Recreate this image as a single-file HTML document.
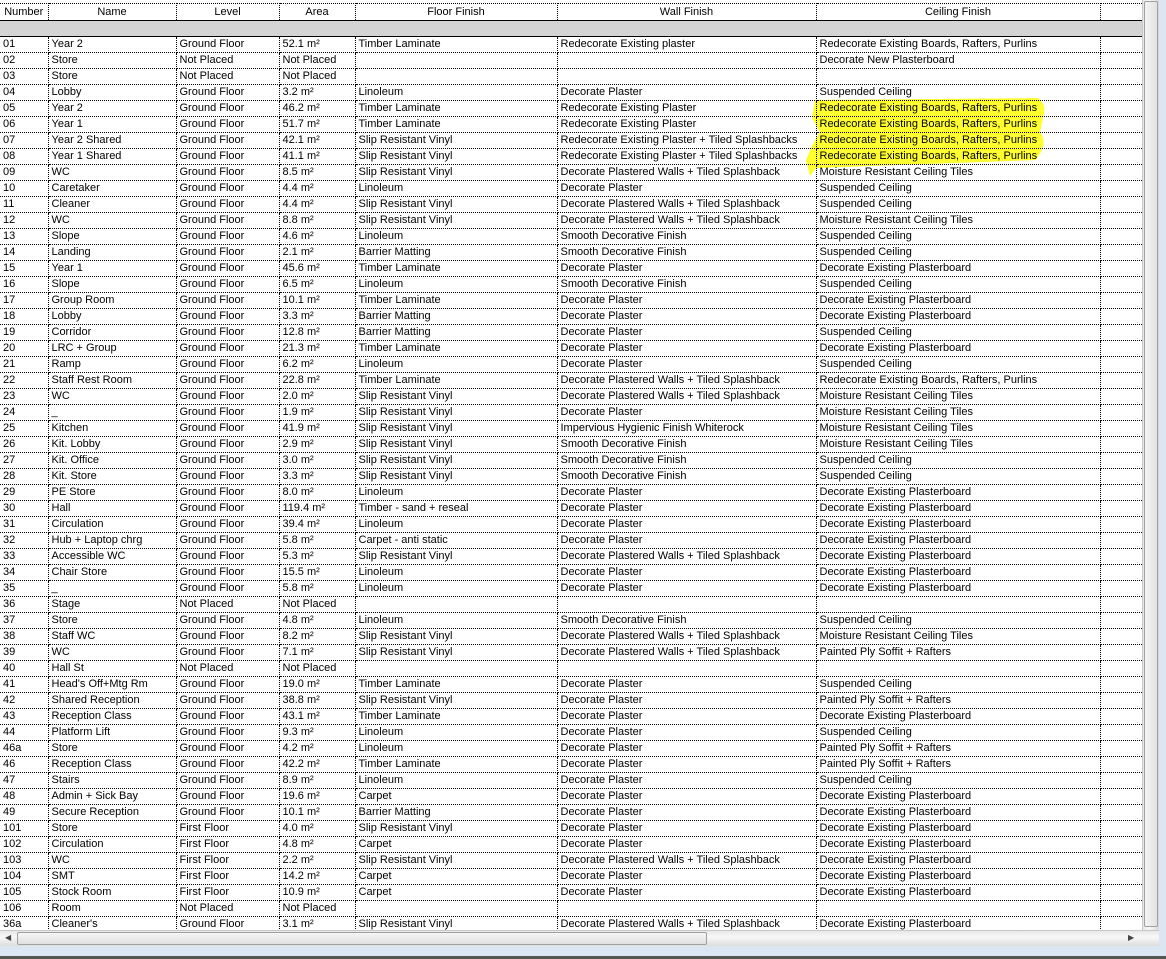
<!DOCTYPE html>
<html><head><meta charset="utf-8"><style>
body{margin:0;width:1166px;height:959px;overflow:hidden;background:#fff;font-family:"Liberation Sans",Arial,sans-serif;font-size:11px;color:#000;position:relative}
#wrap{position:absolute;left:0;top:0;width:1142px;height:930px;overflow:hidden}
table{border-collapse:collapse;table-layout:fixed;width:1142px;margin-top:3px}
td{height:15px;line-height:15px;padding:0 0 0 3px;border-bottom:1px dotted #000;border-right:1px dotted #000;white-space:nowrap;overflow:hidden}
tr.h td{height:15px;text-align:center;padding:0;border-top:1px dotted #000;border-bottom:1px solid #000;line-height:16px}
tr.g td{height:15px;background:#d4d4d4;border-right:none;border-bottom:1px solid #000}
td:last-child{border-right:none}
#hl{position:absolute;left:0;top:0}
#vs{position:absolute;left:1142px;top:0;width:17px;height:930px;background:linear-gradient(90deg,#e8e8e8,#f8f8f8 40%,#d8d8d8);border-left:1px solid #c8c8c8;box-sizing:border-box}
#vs .t{position:absolute;left:1px;top:1px;width:14px;height:926px;border:1px solid #a0a0a0;border-radius:2px;background:linear-gradient(90deg,#f4f4f4,#e2e2e2);box-sizing:border-box}
#rb{position:absolute;left:1159px;top:0;width:7px;height:959px;background:#dbe6f3}
#hs{position:absolute;left:0;top:930px;width:1159px;height:16px;background:linear-gradient(#e8e8e8,#f8f8f8 40%,#dcdcdc);border-top:1px solid #c8c8c8;box-sizing:border-box}
#hs .t{position:absolute;left:17px;top:1px;width:690px;height:13px;border:1px solid #a0a0a0;border-radius:2px;background:linear-gradient(#f6f6f6,#e0e0e0);box-sizing:border-box}
#bb{position:absolute;left:0;top:946px;width:1166px;height:10px;background:#dbe6f3}
#bl{position:absolute;left:0;top:956px;width:1166px;height:3px;background:#555}
</style></head><body>
<div id="wrap">
<table>
<colgroup><col style="width:48px"><col style="width:128px"><col style="width:103px"><col style="width:76px"><col style="width:202px"><col style="width:259px"><col style="width:284px"><col style="width:42px"></colgroup>
<tr class="h"><td>Number</td><td>Name</td><td>Level</td><td>Area</td><td>Floor Finish</td><td>Wall Finish</td><td>Ceiling Finish</td><td></td></tr>
<tr class="g"><td></td><td></td><td></td><td></td><td></td><td></td><td></td><td></td></tr>
<tr><td>01</td><td>Year 2</td><td>Ground Floor</td><td>52.1 m²</td><td>Timber Laminate</td><td>Redecorate Existing plaster</td><td>Redecorate Existing Boards, Rafters, Purlins</td><td></td></tr>
<tr><td>02</td><td>Store</td><td>Not Placed</td><td>Not Placed</td><td></td><td></td><td>Decorate New Plasterboard</td><td></td></tr>
<tr><td>03</td><td>Store</td><td>Not Placed</td><td>Not Placed</td><td></td><td></td><td></td><td></td></tr>
<tr><td>04</td><td>Lobby</td><td>Ground Floor</td><td>3.2 m²</td><td>Linoleum</td><td>Decorate Plaster</td><td>Suspended Ceiling</td><td></td></tr>
<tr><td>05</td><td>Year 2</td><td>Ground Floor</td><td>46.2 m²</td><td>Timber Laminate</td><td>Redecorate Existing Plaster</td><td>Redecorate Existing Boards, Rafters, Purlins</td><td></td></tr>
<tr><td>06</td><td>Year 1</td><td>Ground Floor</td><td>51.7 m²</td><td>Timber Laminate</td><td>Redecorate Existing Plaster</td><td>Redecorate Existing Boards, Rafters, Purlins</td><td></td></tr>
<tr><td>07</td><td>Year 2 Shared</td><td>Ground Floor</td><td>42.1 m²</td><td>Slip Resistant Vinyl</td><td>Redecorate Existing Plaster + Tiled Splashbacks</td><td>Redecorate Existing Boards, Rafters, Purlins</td><td></td></tr>
<tr><td>08</td><td>Year 1 Shared</td><td>Ground Floor</td><td>41.1 m²</td><td>Slip Resistant Vinyl</td><td>Redecorate Existing Plaster + Tiled Splashbacks</td><td>Redecorate Existing Boards, Rafters, Purlins</td><td></td></tr>
<tr><td>09</td><td>WC</td><td>Ground Floor</td><td>8.5 m²</td><td>Slip Resistant Vinyl</td><td>Decorate Plastered Walls + Tiled Splashback</td><td>Moisture Resistant Ceiling Tiles</td><td></td></tr>
<tr><td>10</td><td>Caretaker</td><td>Ground Floor</td><td>4.4 m²</td><td>Linoleum</td><td>Decorate Plaster</td><td>Suspended Ceiling</td><td></td></tr>
<tr><td>11</td><td>Cleaner</td><td>Ground Floor</td><td>4.4 m²</td><td>Slip Resistant Vinyl</td><td>Decorate Plastered Walls + Tiled Splashback</td><td>Suspended Ceiling</td><td></td></tr>
<tr><td>12</td><td>WC</td><td>Ground Floor</td><td>8.8 m²</td><td>Slip Resistant Vinyl</td><td>Decorate Plastered Walls + Tiled Splashback</td><td>Moisture Resistant Ceiling Tiles</td><td></td></tr>
<tr><td>13</td><td>Slope</td><td>Ground Floor</td><td>4.6 m²</td><td>Linoleum</td><td>Smooth Decorative Finish</td><td>Suspended Ceiling</td><td></td></tr>
<tr><td>14</td><td>Landing</td><td>Ground Floor</td><td>2.1 m²</td><td>Barrier Matting</td><td>Smooth Decorative Finish</td><td>Suspended Ceiling</td><td></td></tr>
<tr><td>15</td><td>Year 1</td><td>Ground Floor</td><td>45.6 m²</td><td>Timber Laminate</td><td>Decorate Plaster</td><td>Decorate Existing Plasterboard</td><td></td></tr>
<tr><td>16</td><td>Slope</td><td>Ground Floor</td><td>6.5 m²</td><td>Linoleum</td><td>Smooth Decorative Finish</td><td>Suspended Ceiling</td><td></td></tr>
<tr><td>17</td><td>Group Room</td><td>Ground Floor</td><td>10.1 m²</td><td>Timber Laminate</td><td>Decorate Plaster</td><td>Decorate Existing Plasterboard</td><td></td></tr>
<tr><td>18</td><td>Lobby</td><td>Ground Floor</td><td>3.3 m²</td><td>Barrier Matting</td><td>Decorate Plaster</td><td>Decorate Existing Plasterboard</td><td></td></tr>
<tr><td>19</td><td>Corridor</td><td>Ground Floor</td><td>12.8 m²</td><td>Barrier Matting</td><td>Decorate Plaster</td><td>Suspended Ceiling</td><td></td></tr>
<tr><td>20</td><td>LRC + Group</td><td>Ground Floor</td><td>21.3 m²</td><td>Timber Laminate</td><td>Decorate Plaster</td><td>Decorate Existing Plasterboard</td><td></td></tr>
<tr><td>21</td><td>Ramp</td><td>Ground Floor</td><td>6.2 m²</td><td>Linoleum</td><td>Decorate Plaster</td><td>Suspended Ceiling</td><td></td></tr>
<tr><td>22</td><td>Staff Rest Room</td><td>Ground Floor</td><td>22.8 m²</td><td>Timber Laminate</td><td>Decorate Plastered Walls + Tiled Splashback</td><td>Redecorate Existing Boards, Rafters, Purlins</td><td></td></tr>
<tr><td>23</td><td>WC</td><td>Ground Floor</td><td>2.0 m²</td><td>Slip Resistant Vinyl</td><td>Decorate Plastered Walls + Tiled Splashback</td><td>Moisture Resistant Ceiling Tiles</td><td></td></tr>
<tr><td>24</td><td>_</td><td>Ground Floor</td><td>1.9 m²</td><td>Slip Resistant Vinyl</td><td>Decorate Plaster</td><td>Moisture Resistant Ceiling Tiles</td><td></td></tr>
<tr><td>25</td><td>Kitchen</td><td>Ground Floor</td><td>41.9 m²</td><td>Slip Resistant Vinyl</td><td>Impervious Hygienic Finish Whiterock</td><td>Moisture Resistant Ceiling Tiles</td><td></td></tr>
<tr><td>26</td><td>Kit. Lobby</td><td>Ground Floor</td><td>2.9 m²</td><td>Slip Resistant Vinyl</td><td>Smooth Decorative Finish</td><td>Moisture Resistant Ceiling Tiles</td><td></td></tr>
<tr><td>27</td><td>Kit. Office</td><td>Ground Floor</td><td>3.0 m²</td><td>Slip Resistant Vinyl</td><td>Smooth Decorative Finish</td><td>Suspended Ceiling</td><td></td></tr>
<tr><td>28</td><td>Kit. Store</td><td>Ground Floor</td><td>3.3 m²</td><td>Slip Resistant Vinyl</td><td>Smooth Decorative Finish</td><td>Suspended Ceiling</td><td></td></tr>
<tr><td>29</td><td>PE Store</td><td>Ground Floor</td><td>8.0 m²</td><td>Linoleum</td><td>Decorate Plaster</td><td>Decorate Existing Plasterboard</td><td></td></tr>
<tr><td>30</td><td>Hall</td><td>Ground Floor</td><td>119.4 m²</td><td>Timber - sand + reseal</td><td>Decorate Plaster</td><td>Decorate Existing Plasterboard</td><td></td></tr>
<tr><td>31</td><td>Circulation</td><td>Ground Floor</td><td>39.4 m²</td><td>Linoleum</td><td>Decorate Plaster</td><td>Decorate Existing Plasterboard</td><td></td></tr>
<tr><td>32</td><td>Hub + Laptop chrg</td><td>Ground Floor</td><td>5.8 m²</td><td>Carpet - anti static</td><td>Decorate Plaster</td><td>Decorate Existing Plasterboard</td><td></td></tr>
<tr><td>33</td><td>Accessible WC</td><td>Ground Floor</td><td>5.3 m²</td><td>Slip Resistant Vinyl</td><td>Decorate Plastered Walls + Tiled Splashback</td><td>Decorate Existing Plasterboard</td><td></td></tr>
<tr><td>34</td><td>Chair Store</td><td>Ground Floor</td><td>15.5 m²</td><td>Linoleum</td><td>Decorate Plaster</td><td>Decorate Existing Plasterboard</td><td></td></tr>
<tr><td>35</td><td>_</td><td>Ground Floor</td><td>5.8 m²</td><td>Linoleum</td><td>Decorate Plaster</td><td>Decorate Existing Plasterboard</td><td></td></tr>
<tr><td>36</td><td>Stage</td><td>Not Placed</td><td>Not Placed</td><td></td><td></td><td></td><td></td></tr>
<tr><td>37</td><td>Store</td><td>Ground Floor</td><td>4.8 m²</td><td>Linoleum</td><td>Smooth Decorative Finish</td><td>Suspended Ceiling</td><td></td></tr>
<tr><td>38</td><td>Staff WC</td><td>Ground Floor</td><td>8.2 m²</td><td>Slip Resistant Vinyl</td><td>Decorate Plastered Walls + Tiled Splashback</td><td>Moisture Resistant Ceiling Tiles</td><td></td></tr>
<tr><td>39</td><td>WC</td><td>Ground Floor</td><td>7.1 m²</td><td>Slip Resistant Vinyl</td><td>Decorate Plastered Walls + Tiled Splashback</td><td>Painted Ply Soffit + Rafters</td><td></td></tr>
<tr><td>40</td><td>Hall St</td><td>Not Placed</td><td>Not Placed</td><td></td><td></td><td></td><td></td></tr>
<tr><td>41</td><td>Head's Off+Mtg Rm</td><td>Ground Floor</td><td>19.0 m²</td><td>Timber Laminate</td><td>Decorate Plaster</td><td>Suspended Ceiling</td><td></td></tr>
<tr><td>42</td><td>Shared Reception</td><td>Ground Floor</td><td>38.8 m²</td><td>Slip Resistant Vinyl</td><td>Decorate Plaster</td><td>Painted Ply Soffit + Rafters</td><td></td></tr>
<tr><td>43</td><td>Reception Class</td><td>Ground Floor</td><td>43.1 m²</td><td>Timber Laminate</td><td>Decorate Plaster</td><td>Decorate Existing Plasterboard</td><td></td></tr>
<tr><td>44</td><td>Platform Lift</td><td>Ground Floor</td><td>9.3 m²</td><td>Linoleum</td><td>Decorate Plaster</td><td>Suspended Ceiling</td><td></td></tr>
<tr><td>46a</td><td>Store</td><td>Ground Floor</td><td>4.2 m²</td><td>Linoleum</td><td>Decorate Plaster</td><td>Painted Ply Soffit + Rafters</td><td></td></tr>
<tr><td>46</td><td>Reception Class</td><td>Ground Floor</td><td>42.2 m²</td><td>Timber Laminate</td><td>Decorate Plaster</td><td>Painted Ply Soffit + Rafters</td><td></td></tr>
<tr><td>47</td><td>Stairs</td><td>Ground Floor</td><td>8.9 m²</td><td>Linoleum</td><td>Decorate Plaster</td><td>Suspended Ceiling</td><td></td></tr>
<tr><td>48</td><td>Admin + Sick Bay</td><td>Ground Floor</td><td>19.6 m²</td><td>Carpet</td><td>Decorate Plaster</td><td>Decorate Existing Plasterboard</td><td></td></tr>
<tr><td>49</td><td>Secure Reception</td><td>Ground Floor</td><td>10.1 m²</td><td>Barrier Matting</td><td>Decorate Plaster</td><td>Decorate Existing Plasterboard</td><td></td></tr>
<tr><td>101</td><td>Store</td><td>First Floor</td><td>4.0 m²</td><td>Slip Resistant Vinyl</td><td>Decorate Plaster</td><td>Decorate Existing Plasterboard</td><td></td></tr>
<tr><td>102</td><td>Circulation</td><td>First Floor</td><td>4.8 m²</td><td>Carpet</td><td>Decorate Plaster</td><td>Decorate Existing Plasterboard</td><td></td></tr>
<tr><td>103</td><td>WC</td><td>First Floor</td><td>2.2 m²</td><td>Slip Resistant Vinyl</td><td>Decorate Plastered Walls + Tiled Splashback</td><td>Decorate Existing Plasterboard</td><td></td></tr>
<tr><td>104</td><td>SMT</td><td>First Floor</td><td>14.2 m²</td><td>Carpet</td><td>Decorate Plaster</td><td>Decorate Existing Plasterboard</td><td></td></tr>
<tr><td>105</td><td>Stock Room</td><td>First Floor</td><td>10.9 m²</td><td>Carpet</td><td>Decorate Plaster</td><td>Decorate Existing Plasterboard</td><td></td></tr>
<tr><td>106</td><td>Room</td><td>Not Placed</td><td>Not Placed</td><td></td><td></td><td></td><td></td></tr>
<tr><td>36a</td><td>Cleaner's</td><td>Ground Floor</td><td>3.1 m²</td><td>Slip Resistant Vinyl</td><td>Decorate Plastered Walls + Tiled Splashback</td><td>Decorate Existing Plasterboard</td><td></td></tr>
</table>
</div>
<svg id="hl" width="1166" height="959" style="mix-blend-mode:multiply;pointer-events:none">
<path d="M815 100 L1038 98 Q1046 104 1044 114 L1040 132 Q1046 140 1042 150 L1036 160 L816 168 L810 176 L806 160 L812 146 L820 132 L812 118 Z" fill="#ffff30"/>
</svg>
<div id="vs"><div class="t"></div></div>
<div id="rb"></div>
<div id="hs"><span style="position:absolute;left:5px;top:2px;font-size:8px;color:#444">◀</span><div class="t"></div><span style="position:absolute;left:1128px;top:2px;font-size:8px;color:#444">▶</span></div>
<div id="bb"></div>
<div id="bl"></div>
</body></html>
